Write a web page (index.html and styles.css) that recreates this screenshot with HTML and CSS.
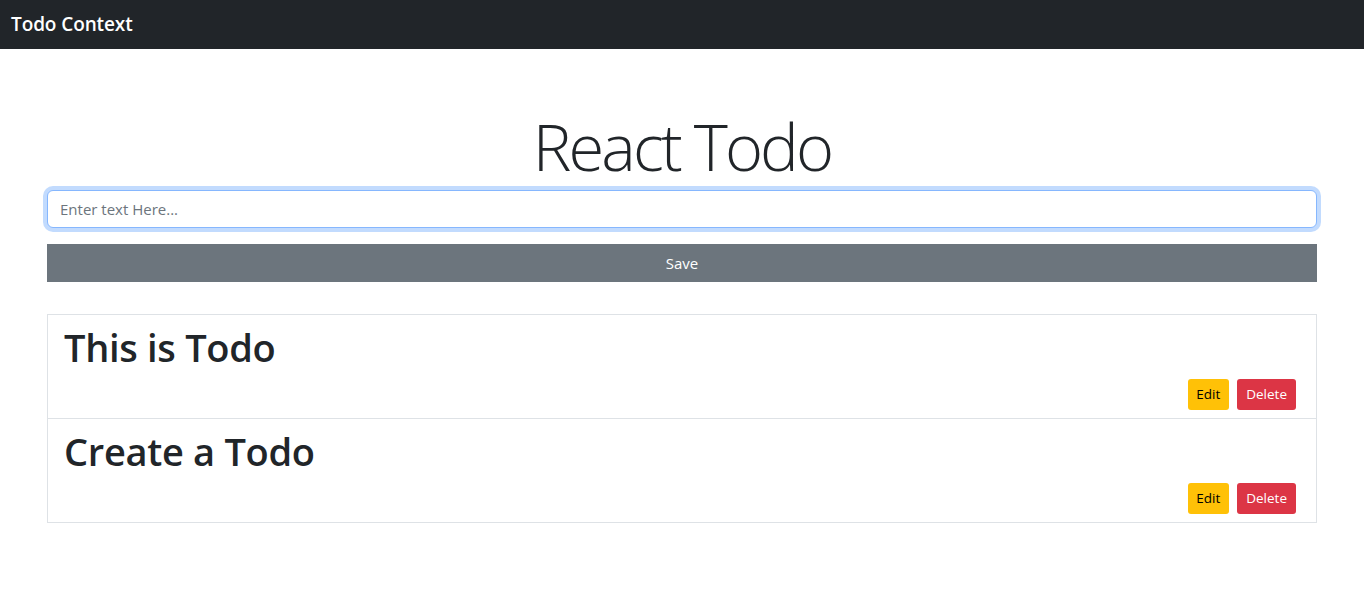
FILE: index.html
```html
<!DOCTYPE html>
<html lang="en">
<head>
<meta charset="utf-8">
<title>Todo Context</title>
<link rel="stylesheet" href="styles.css">
</head>
<body>
<nav class="navbar"><span class="brand">Todo Context</span></nav>
<main class="main">
  <h1 class="title">React Todo</h1>
  <form class="todo-form">
    <input class="text-input focused" type="text" placeholder="Enter text Here...">
    <button class="save-btn" type="button">Save</button>
  </form>
  <ul class="todo-list">
    <li class="todo-item">
      <h2 class="todo-text">This is Todo</h2>
      <div class="actions">
        <button class="btn btn-edit" type="button">Edit</button>
        <button class="btn btn-delete" type="button">Delete</button>
      </div>
    </li>
    <li class="todo-item">
      <h2 class="todo-text">Create a Todo</h2>
      <div class="actions">
        <button class="btn btn-edit" type="button">Edit</button>
        <button class="btn btn-delete" type="button">Delete</button>
      </div>
    </li>
  </ul>
</main>
</body>
</html>
```
FILE: styles.css
```css
* { box-sizing: border-box; }
html, body {
  margin: 0;
  padding: 0;
  background: #fff;
  color: #212529;
  font-family: "Open Sans", "Noto Sans", "Liberation Sans", sans-serif;
  font-size: 16px;
  line-height: 1.5;
}
.navbar {
  height: 49px;
  background: #212529;
  display: flex;
  align-items: center;
  padding: 0 11px;
}
.brand {
  color: #fff;
  font-size: 19px;
  font-weight: 600;
  letter-spacing: -0.1px;
}
.main {
  margin: 0 47px;
  padding-top: 55px;
}
.title {
  margin: 0;
  text-align: center;
  font-size: 65px;
  font-weight: 300;
  line-height: 85px;
  letter-spacing: -2.9px;
}
.todo-form {
  display: flex;
  flex-direction: column;
  gap: 16px;
  margin-top: 1px;
}
.text-input {
  height: 38px;
  width: 100%;
  padding: 6px 12px;
  font: inherit;
  font-size: 15px;
  color: #212529;
  border: 1px solid #ced4da;
  border-radius: 6px;
  outline: none;
}
.text-input.focused {
  border-color: #86b7fe;
  box-shadow: 0 0 0 4px rgba(13, 110, 253, 0.25);
}
.text-input::placeholder { color: #6c757d; }
.save-btn {
  height: 38px;
  width: 100%;
  border: 0;
  border-radius: 0;
  background: #6c757d;
  color: #fff;
  font: inherit;
  font-size: 15px;
}
.todo-list {
  list-style: none;
  margin: 32px 0 0;
  padding: 0;
}
.todo-item {
  border: 1px solid #dee2e6;
  padding: 8px 16px;
}
.todo-item + .todo-item { border-top: 0; }
.todo-text {
  margin: 0 0 8px;
  font-size: 38px;
  font-weight: 600;
  line-height: 48px;
  letter-spacing: -0.3px;
}
.actions {
  display: flex;
  justify-content: flex-end;
}
.btn {
  height: 31px;
  margin: 0 4px;
  padding: 0 8px;
  border: 0;
  border-radius: 3px;
  font: inherit;
  font-size: 13.5px;
}
.btn-edit { background: #ffc107; color: #000; padding: 0 9px 0 8px; }
.btn-delete { background: #dc3545; color: #fff; padding: 0 9px; }
```
